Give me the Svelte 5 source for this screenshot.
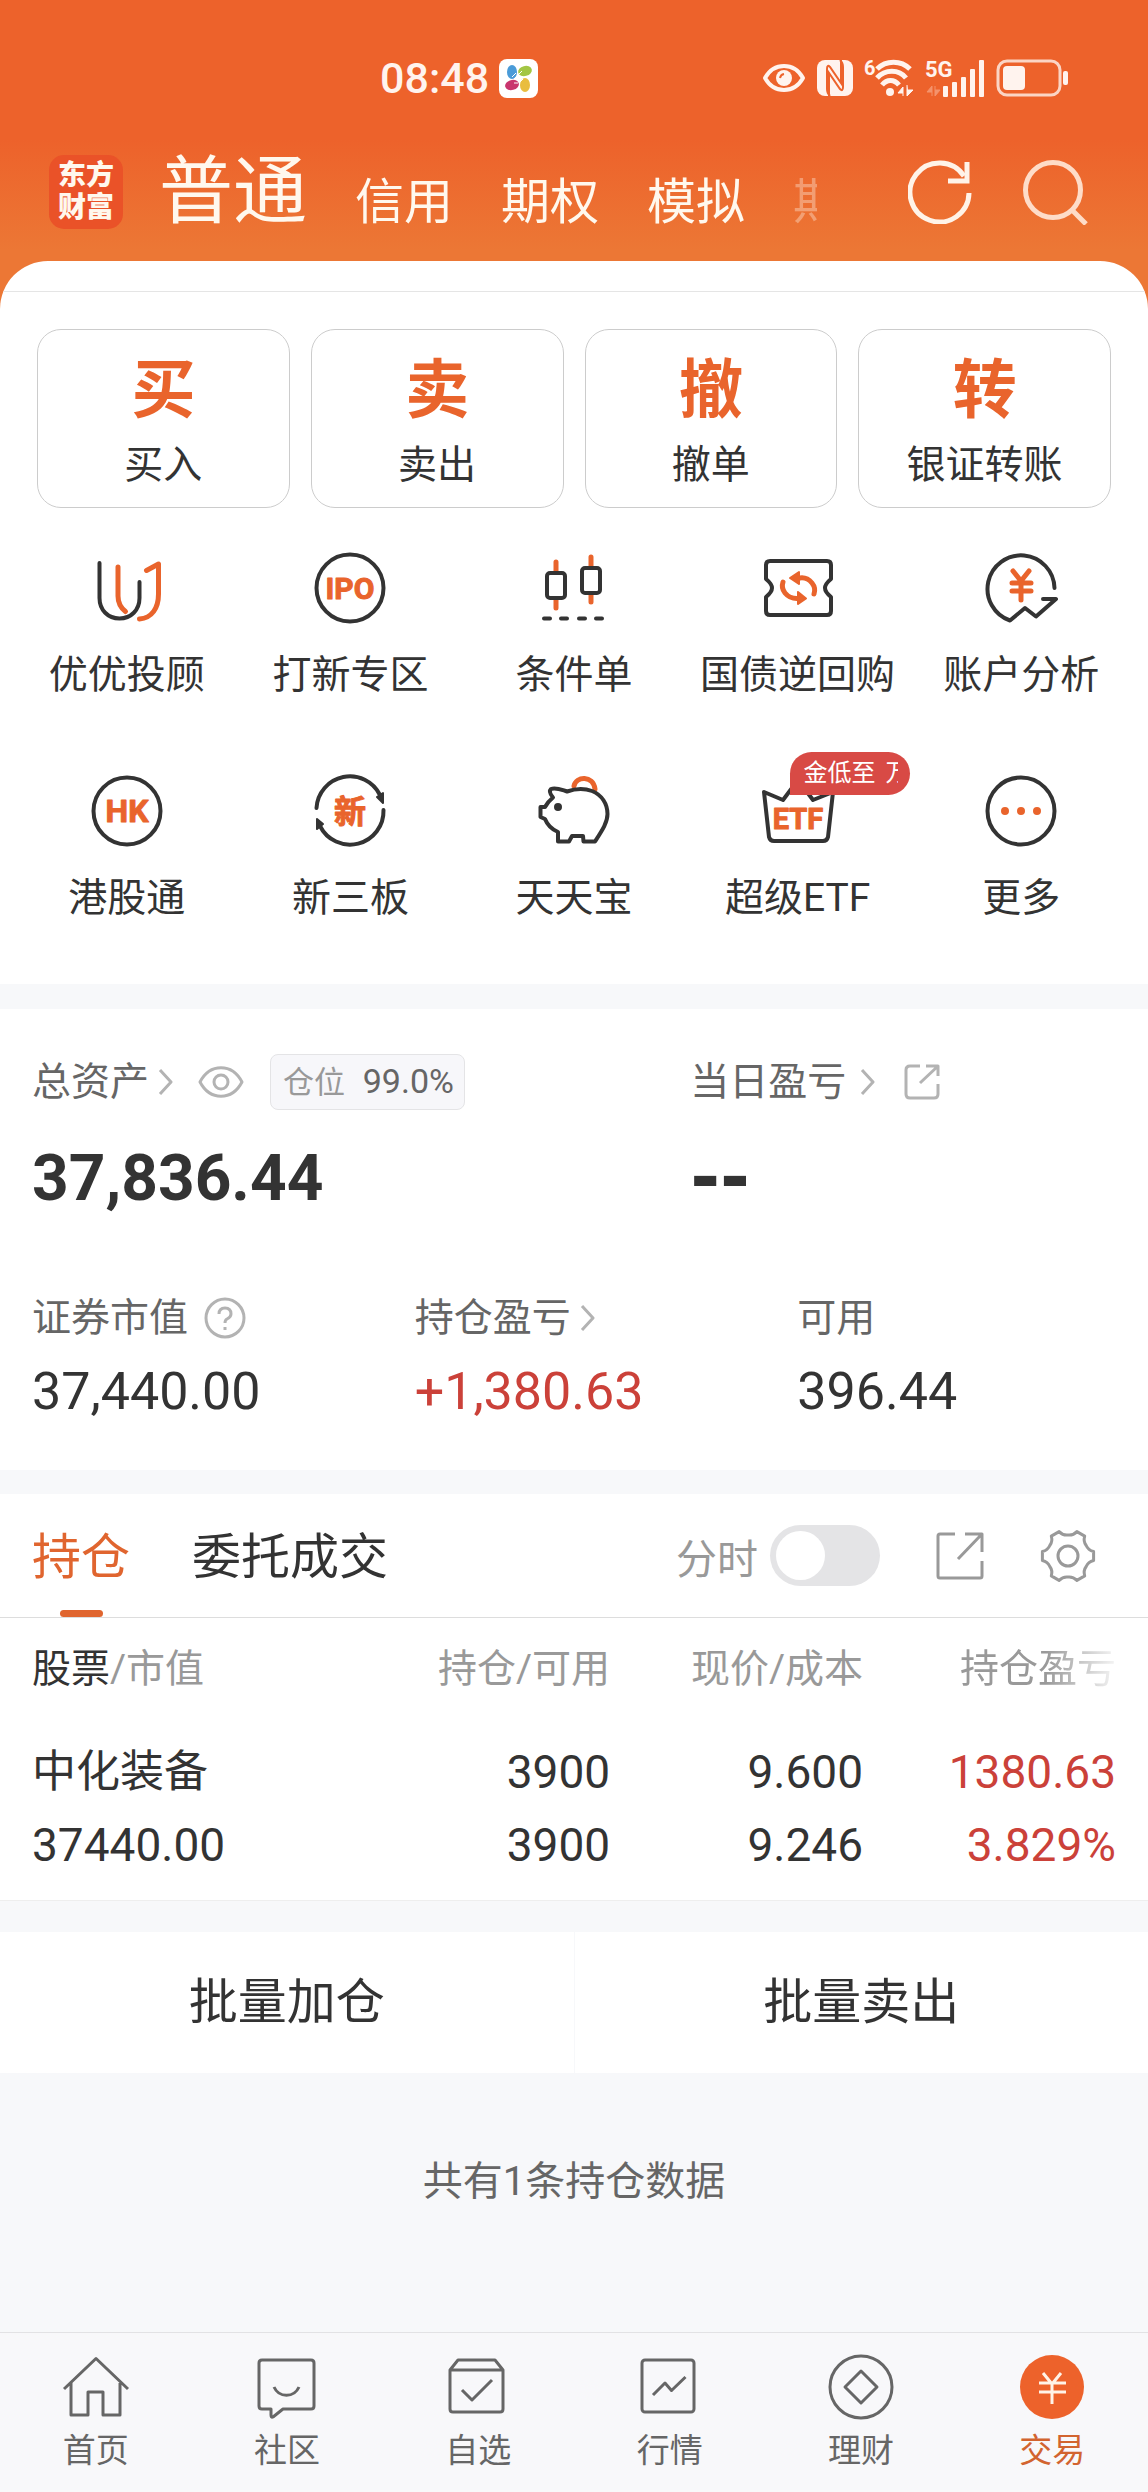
<script>
  const accountTabs = ['普通', '信用', '期权', '模拟', '期货'];
  const trades = [
    { mark: '买', label: '买入' },
    { mark: '卖', label: '卖出' },
    { mark: '撤', label: '撤单' },
    { mark: '转', label: '银证转账' }
  ];
  const shortcuts = [
    { icon: 'advisor', label: '优优投顾' },
    { icon: 'ipo', label: '打新专区' },
    { icon: 'candles', label: '条件单' },
    { icon: 'ticket', label: '国债逆回购' },
    { icon: 'analysis', label: '账户分析' },
    { icon: 'hk', label: '港股通' },
    { icon: 'otc', label: '新三板' },
    { icon: 'pig', label: '天天宝' },
    { icon: 'etf', label: '超级ETF', badge: true },
    { icon: 'more', label: '更多' }
  ];
  const nav = [
    { icon: 'home', label: '首页' },
    { icon: 'community', label: '社区' },
    { icon: 'watch', label: '自选' },
    { icon: 'market', label: '行情' },
    { icon: 'wealth', label: '理财' },
    { icon: 'trade', label: '交易' }
  ];

  // Outline of a six-toothed gear centred on (28, 28).
  function gearPath() {
    const at = (deg, r) => {
      const a = (deg * Math.PI) / 180;
      return `${(28 + r * Math.cos(a)).toFixed(1)} ${(28 + r * Math.sin(a)).toFixed(1)}`;
    };
    let d = '';
    for (let i = 0; i < 6; i++) {
      const a = i * 60;
      d += `${i ? 'L' : 'M'}${at(a - 10, 26)}L${at(a + 10, 26)}Q${at(a + 16, 21)} ${at(a + 30, 21)}Q${at(a + 44, 21)} ${at(a + 50, 26)}`;
    }
    return d + 'Z';
  }
  const gear = gearPath();
  let intraday = $state(false);
</script>

{#snippet chevron()}
  <svg class="line chevron" width="16" height="26" viewBox="0 0 16 26"><path d="M2 1L13 13L2 25" /></svg>
{/snippet}

<div class="page">
  <div class="top">
    <div class="status">
      <div class="clock">
        <span>08:48</span>
        <svg width="39" height="39" viewBox="0 0 39 39">
          <rect width="39" height="39" rx="8" fill="#fff" />
          <ellipse cx="13" cy="13" rx="5" ry="7" fill="#4a9bd8" />
          <ellipse cx="26" cy="12" rx="7" ry="5" fill="#a3c644" transform="rotate(-15 26 12)" />
          <ellipse cx="13" cy="26" rx="7" ry="5" fill="#c9356e" transform="rotate(-15 13 26)" />
          <ellipse cx="26" cy="26" rx="5" ry="7" fill="#e9bd3f" />
          <path d="M13 18l4-4M15 20l4-4M20 15l3-3M20 24l4-4M15 24l4 0" stroke="#fff" stroke-width="1" />
        </svg>
      </div>
      <div class="signals">
        <svg width="44" height="30" viewBox="0 0 44 30">
          <path d="M3 15C12 -1 32 -1 41 15C32 31 12 31 3 15Z" fill="none" stroke="#fff3ee" stroke-width="4" stroke-linejoin="round" />
          <circle cx="22" cy="15" r="8" fill="#fff3ee" />
          <path d="M18 15a5 5 0 0 1 4-4" fill="none" stroke="#ed622b" stroke-width="2" />
        </svg>
        <svg width="36" height="36" viewBox="0 0 36 36">
          <rect width="36" height="36" rx="8" fill="#fff3ee" />
          <path d="M12 36V13L23 29Q26 32 26 27V7Q26 3 23 0M24 0V23L13 7Q10 4 10 9V29Q10 33 13 36" fill="none" stroke="#ed622b" stroke-width="2" />
        </svg>
        <svg width="50" height="40" viewBox="0 0 50 40">
          <text x="0" y="17" class="tiny">6</text>
          <g fill="none" stroke="#fff3ee" stroke-width="5">
            <path d="M13 11C22 2 37 2 46 11" /><path d="M13 20C21 11 35 11 42 20" /><path d="M18 27C23 21 30 21 35 27" />
          </g>
          <circle cx="26" cy="34" r="4" fill="#fff3ee" />
          <path d="M39 38V29L34 35H39M43 27V38L49 32H44" fill="#fff3ee" stroke="#fff3ee" />
        </svg>
        <svg width="60" height="40" viewBox="0 0 60 40">
          <text x="0" y="19" class="fiveg">5G</text>
          <path d="M7 38V28L2 34H7M10 28V38L15 32H10" fill="#f4936c" stroke="#f4936c" />
          <g fill="#fff3ee">
            <rect x="18" y="28" width="5" height="11" rx="1" /><rect x="27" y="24" width="5" height="15" rx="1" />
            <rect x="36" y="19" width="5" height="20" rx="1" /><rect x="45" y="11" width="5" height="28" rx="1" />
            <rect x="54" y="2" width="5" height="37" rx="1" />
          </g>
        </svg>
        <svg width="73" height="38" viewBox="0 0 73 38">
          <rect x="2" y="2" width="62" height="34" rx="9" fill="none" stroke="#fbd5c5" stroke-width="3" />
          <rect x="7" y="7" width="22" height="24" rx="4" fill="#fff3ee" />
          <rect x="67" y="12" width="5" height="14" rx="2" fill="#fff3ee" />
        </svg>
      </div>
    </div>

    <header class="header">
      <div class="logo"><span>东方</span><span>财富</span></div>
      <div class="accounts">
        {#each accountTabs as t, i}
          <button class:current={i === 0} class:faint={i === 4}>{t}</button>
        {/each}
      </div>
      <button class="round" aria-label="刷新">
        <svg width="64" height="64" viewBox="0 0 64 64" fill="none" stroke="#fff3e8" stroke-width="5"><path d="M61 33A29.500 29.500 0 1 1 56 16" /><path d="M59 2V21H40" /></svg>
      </button>
      <button class="round" aria-label="搜索">
        <svg width="66" height="66" viewBox="0 0 66 66" fill="none" stroke="#fedcc8" stroke-width="5"><circle cx="30" cy="31" r="27.500" /><path d="M49 51L63 65" /></svg>
      </button>
    </header>

    <main class="panel">
      <div class="rule"></div>
      <div class="trades">
        {#each trades as t}
          <button><b>{t.mark}</b><span>{t.label}</span></button>
        {/each}
      </div>

      <div class="shortcuts">
        {#each shortcuts as s}
          <button>
            <span class="glyph">
              <svg class="tool" width="72" height="72" viewBox="0 0 72 72">
                {#if s.icon === 'advisor'}
                  <path d="M8.500 11V46C8.500 58 17 66.500 28.500 66.500S48.500 58 48.500 46V30" />
                  <path class="o" d="M27 15V44C27 51 30 56 34.500 59.500M55.500 18.500L67.500 12V42C67.500 56 61 66 48.500 67" />
                {:else if s.icon === 'ipo'}
                  <circle cx="36" cy="36" r="33.500" /><text x="36" y="47" font-size="30">IPO</text>
                {:else if s.icon === 'candles'}
                  <path class="o" d="M18 10V20M18 48V56M53 5V15M53 43V50" />
                  <rect x="9" y="21" width="18" height="25" rx="3" /><rect x="44" y="16" width="18" height="25" rx="3" />
                  <path d="M6 66.500H12M23 66.500H29M41 66.500H47M58 66.500H64" />
                {:else if s.icon === 'ticket'}
                  <path d="M8 9H65Q69 9 69 13V27Q63 32 63 36T69 45V59Q69 63 65 63H8Q4 63 4 59V45Q10 40 10 36T4 27V13Q4 9 8 9Z" />
                  <path class="o" d="M21 30Q19 36 23 41Q28 47 36 46.500M52 42Q54 36 50 31Q45 25 38 26" />
                  <path class="of" d="M28 26L37 20V32ZM44 46.500L36 40V52Z" />
                {:else if s.icon === 'analysis'}
                  <path d="M69.500 36A33.500 33.500 0 1 0 25 68.500L40 56L51 64.500L71 47H58" />
                  <path class="o" d="M28 19L36 29L44 19M36 29V48M27 31H46M27 39H46" />
                {:else if s.icon === 'hk'}
                  <circle cx="36" cy="36" r="33.500" /><text x="36" y="47" font-size="32">HK</text>
                {:else if s.icon === 'otc'}
                  <path d="M2.500 33A33.500 33.500 0 0 1 66 20M69.500 35A33.500 33.500 0 0 1 6 51" />
                  <path class="df" d="M63 22L69 18V28ZM9 49L3 54V44Z" />
                  <text x="36" y="48" font-size="32">新</text>
                {:else if s.icon === 'pig'}
                  <path class="o" d="M36 11C38 1 55 0 57 14" />
                  <path d="M13 14C18 12 24 15 29 16.500C36 14 46 13 54 16C64 20 69.500 29 69.500 39C69.500 47 65 54 57 66.500H45.500L45 61H34L31 66.500H20V57C13 54 9 49 7 44L2.500 42V32H7C9 28 12 25 15 22.500C12 19 11 16 13 14Z" />
                  <circle class="df" cx="20" cy="32" r="3" />
                {:else if s.icon === 'etf'}
                  <path d="M2 17L21 25L36 5L51 25L71 17L66 62Q65 66 61 66H12Q8 66 7 62Z" />
                  <text x="36" y="54" font-size="29">ETF</text>
                {:else}
                  <circle cx="36" cy="36" r="33.500" />
                  <circle class="of" cx="20" cy="36" r="3" /><circle class="of" cx="36" cy="36" r="3" /><circle class="of" cx="52" cy="36" r="3" />
                {/if}
              </svg>
              {#if s.badge}<span class="badge"><span class="ticker">金低至 <i>万</i></span></span>{/if}
            </span>
            <span>{s.label}</span>
          </button>
        {/each}
      </div>
    </main>
  </div>

  <section class="assets">
    <div class="totals">
      <div>
        <div class="caption">
          总资产{@render chevron()}
          <svg class="line eye" width="46" height="32" viewBox="0 0 46 32"><path d="M2 16C12 -3 34 -3 44 16C34 35 12 35 2 16Z" /><circle cx="23" cy="16" r="7" /></svg>
          <span class="chip">仓位 <em>99.0%</em></span>
        </div>
        <strong>37,836.44</strong>
      </div>
      <div>
        <div class="caption spaced">
          当日盈亏{@render chevron()}
          <svg class="line share" width="36" height="36" viewBox="0 0 36 36"><path d="M16 2H6Q2 2 2 6V30Q2 34 6 34H30Q34 34 34 30V20M16 19L33 3M22 2H34V12" /></svg>
        </div>
        <strong class="dash">--</strong>
      </div>
    </div>
    <div class="metrics">
      <div>
        <div class="caption">证券市值
          <svg class="line help" width="42" height="42" viewBox="0 0 42 42"><circle cx="21" cy="21" r="19" /><path d="M15 17Q15 11 21 11T27 17Q27 20 23 22Q21 23 21 26M21 30V33" /></svg>
        </div>
        <span>37,440.00</span>
      </div>
      <div><div class="caption">持仓盈亏{@render chevron()}</div><span class="up">+1,380.63</span></div>
      <div><div class="caption">可用</div><span>396.44</span></div>
    </div>
  </section>

  <section class="holdings">
    <div class="bar">
      <button class="tab current">持仓</button>
      <button class="tab">委托成交</button>
      <label class="toggle">分时<input type="checkbox" bind:checked={intraday} /></label>
      <button class="tool-btn" aria-label="分享">
        <svg width="48" height="48" viewBox="0 0 48 48"><path d="M19 2H4Q2 2 2 4V44Q2 46 4 46H44Q46 46 46 44V29M22 27L45 3M29 2H46V20" /></svg>
      </button>
      <button class="tool-btn" aria-label="设置">
        <svg width="56" height="56" viewBox="0 0 56 56"><path d={gear} /><circle cx="28" cy="28" r="10" /></svg>
      </button>
    </div>
    <table>
      <thead>
        <tr><th><b>股票</b>/市值</th><th>持仓/可用</th><th>现价/成本</th><th><span class="fade">持仓盈亏</span></th></tr>
      </thead>
      <tbody>
        <tr>
          <td><span class="name">中化装备</span><span>37440.00</span></td>
          <td><span>3900</span><span>3900</span></td>
          <td><span>9.600</span><span>9.246</span></td>
          <td class="up"><span>1380.63</span><span>3.829%</span></td>
        </tr>
      </tbody>
    </table>
  </section>

  <div class="batch"><button>批量加仓</button><button>批量卖出</button></div>
  <p class="count">共有1条持仓数据</p>

  <nav>
    {#each nav as n}
      <a href="#{n.icon}" class:active={n.icon === 'trade'}>
        <svg width="68" height="68" viewBox="0 0 68 68">
          {#if n.icon === 'home'}
            <path d="M2 36L34 5.500L66 36M9 30V62H26V39H41V62H58V30" />
          {:else if n.icon === 'community'}
            <path d="M9 7H58Q61 7 61 10V53Q61 56 58 56H30L20 64Q18 65 18 62V56H9Q6 56 6 53V10Q6 7 9 7Z" /><path d="M21 34C26 45 41 45 46 34" />
          {:else if n.icon === 'watch'}
            <path d="M6 17L14 7H51L59 17V56Q59 59 56 59H9Q6 59 6 56ZM6 17H59M18 37L28 47L48 27" />
          {:else if n.icon === 'market'}
            <rect x="6" y="7" width="52" height="52" rx="3" /><path d="M17 42L29 30L35.500 37.500L49.500 24" />
          {:else if n.icon === 'wealth'}
            <circle cx="34" cy="34" r="31" /><path d="M34 18L50 34L34 50L18 34Z" />
          {:else}
            <circle cx="34" cy="34" r="32" /><path d="M25 20L34 31L43 20M34 31V51M21 30H48M21 39H48" />
          {/if}
        </svg>
        <span>{n.label}</span>
      </a>
    {/each}
  </nav>
</div>

<style>
  :global(body) { margin: 0; background: #f7f8fa; }
  .page {
    min-height: 100vh;
    display: flex;
    flex-direction: column;
    background: #f7f8fa;
    color: #333;
    font-family: Roboto, "Noto Sans CJK SC", sans-serif;
  }
  button {
    font: inherit;
    color: inherit;
    border: 0;
    padding: 0;
    background: none;
    white-space: nowrap;
  }
  svg { display: block; flex: none; }

  .top { background: linear-gradient(#ed622b 140px, #ec7735 250px); }
  .status {
    display: flex;
    justify-content: space-between;
    align-items: center;
    height: 44px;
    padding: 56px 79px 0 380px;
    color: #fff3ee;
  }
  .clock { display: flex; align-items: center; gap: 10px; font-size: 43px; font-weight: 500; line-height: 44px; }
  .signals { display: flex; align-items: center; gap: 11px; }
  .signals svg { overflow: visible; }
  .tiny { font-size: 20px; font-weight: 700; fill: #fff3ee; }
  .fiveg { font-size: 22px; font-weight: 700; fill: #fff3ee; }

  .header {
    display: flex;
    align-items: center;
    height: 92px;
    padding: 46px 59px 23px 49px;
    color: #fff8ee;
  }
  .logo {
    display: flex;
    flex-direction: column;
    justify-content: center;
    align-items: center;
    width: 74px;
    height: 74px;
    border-radius: 15px;
    background: #ea5228;
    font-size: 28px;
    font-weight: 900;
    line-height: 32px;
  }
  .accounts {
    flex: 1;
    display: flex;
    align-items: flex-end;
    gap: 48px;
    min-width: 0;
    overflow: hidden;
    margin: 0 91px 0 36px;
    font-size: 49px;
    line-height: 70px;
  }
  .accounts .current { font-size: 74px; line-height: 92px; }
  .accounts .faint { opacity: 0.35; }
  .round + .round { margin-left: 51px; }

  .panel { background: #fff; border-radius: 48px 48px 0 0; overflow: hidden; }
  .rule { height: 30px; border-bottom: 1px solid #e5e5e5; }
  .trades {
    display: grid;
    grid-template-columns: repeat(4, 1fr);
    gap: 21px;
    padding: 37px 37px 0;
  }
  .trades button {
    display: flex;
    flex-direction: column;
    align-items: center;
    gap: 14px;
    padding: 25px 0 18px;
    border: 1px solid #ccc;
    border-radius: 24px;
    font-size: 39px;
    line-height: 48px;
  }
  .trades b { color: #e9642c; font-size: 64px; line-height: 72px; font-weight: 700; }

  .shortcuts {
    display: grid;
    grid-template-columns: repeat(5, 1fr);
    row-gap: 76px;
    padding: 44px 15px 62px;
    font-size: 39px;
    line-height: 48px;
  }
  .shortcuts button { display: flex; flex-direction: column; align-items: center; gap: 27px; }
  .glyph { position: relative; }
  .tool { fill: none; stroke: #333; stroke-width: 4; stroke-linecap: round; stroke-linejoin: round; overflow: visible; }
  .tool .o { stroke: #e9642c; stroke-width: 5; }
  .tool .of { fill: #e9642c; stroke: #e9642c; stroke-width: 2; }
  .tool .df { fill: #333; stroke-width: 2; }
  .tool text { fill: #e9642c; stroke: #e9642c; stroke-width: 1; text-anchor: middle; font-weight: 700; }
  .badge {
    position: absolute;
    left: 28px;
    top: -23px;
    padding: 0 12px 0 14px;
    border-radius: 22px 22px 22px 0;
    background: #d84a45;
    color: #fff;
    font-size: 24px;
    line-height: 43px;
  }
  .ticker { display: block; width: 94px; overflow: hidden; white-space: nowrap; text-align: left; }
  .ticker i { font-style: normal; margin-left: 4px; }

  .assets { margin-top: 25px; padding: 46px 0 48px; background: #fff; }
  .totals { display: grid; grid-template-columns: 17fr 11fr; padding: 0 32px; }
  .caption { display: flex; align-items: center; color: #666; font-size: 39px; line-height: 48px; white-space: nowrap; }
  .totals .caption { height: 54px; }
  .line { fill: none; stroke: #b3b3b3; stroke-width: 3; stroke-linejoin: round; }
  .chevron { margin-left: 9px; }
  .spaced .chevron { margin-left: 14px; }
  .eye { margin-left: 24px; }
  .share { margin-left: 28px; }
  .help { margin-left: 16px; }
  .chip {
    margin-left: 26px;
    padding: 0 10px 0 12px;
    border: 1px solid #e4e4e6;
    border-radius: 8px;
    background: #f7f7fa;
    color: #999;
    font-size: 31px;
    line-height: 52px;
  }
  .chip em { margin-left: 10px; color: #666; font-style: normal; font-size: 34px; }
  strong { display: block; margin-top: 32px; font-size: 64px; line-height: 76px; }
  .dash { font-family: "DejaVu Sans", sans-serif; font-size: 72px; line-height: 70px; }
  .metrics { display: grid; grid-template-columns: repeat(3, 1fr); margin-top: 77px; }
  .metrics > div { padding-left: 32px; }
  .metrics span { display: block; margin-top: 20px; font-size: 52px; line-height: 60px; }
  .up, .metrics .up { color: #cb4139; }

  .holdings { margin-top: 24px; background: #fff; border-bottom: 1px solid #eee; }
  .bar {
    display: flex;
    align-items: center;
    height: 123px;
    padding: 0 52px 0 32px;
    border-bottom: 1px solid #ddd;
  }
  .tab { position: relative; height: 100%; margin-right: 62px; padding-bottom: 6px; font-size: 49px; }
  .tab.current { color: #e0652f; }
  .tab.current::after {
    content: "";
    position: absolute;
    left: 50%;
    bottom: 0;
    width: 43px;
    height: 7px;
    margin-left: -21px;
    border-radius: 4px;
    background: #e0652f;
  }
  .toggle { display: flex; align-items: center; gap: 12px; margin-left: auto; color: #999; font-size: 41px; }
  .toggle input {
    appearance: none;
    display: flex;
    align-items: center;
    width: 110px;
    height: 61px;
    margin: 0;
    padding: 0 6px;
    box-sizing: border-box;
    border-radius: 31px;
    background: #e4e4e6;
  }
  .toggle input::before { content: ""; width: 49px; height: 49px; border-radius: 50%; background: #fff; }
  .toggle input:checked { background: #e9642c; justify-content: flex-end; }
  .tool-btn { margin-left: 56px; }
  .tool-btn svg { fill: none; stroke: #999; stroke-width: 3; stroke-linejoin: round; }

  table { width: calc(100% - 64px); margin: 0 32px; border-collapse: collapse; table-layout: fixed; }
  th { padding: 27px 0 0; color: #999; font-size: 39px; line-height: 48px; font-weight: 400; text-align: right; white-space: nowrap; }
  th b { color: #333; font-weight: 400; }
  th:first-child, td:first-child { width: 30%; text-align: left; }
  td { padding: 43px 0 18px; font-size: 46px; line-height: 73px; text-align: right; }
  td span { display: block; }
  .name { font-size: 44px; }
  .fade { mask-image: linear-gradient(to right, #000 55%, transparent 105%); }

  .batch { display: flex; gap: 1px; margin-top: 31px; }
  .batch button { flex: 1; background: #fff; font-size: 49px; line-height: 141px; }
  .count { margin: 85px 0; color: #666; font-size: 40px; line-height: 48px; text-align: center; }

  nav {
    display: grid;
    grid-template-columns: repeat(6, 1fr);
    margin-top: auto;
    border-top: 1px solid #e2e2e4;
    background: #f8f8fa;
  }
  nav a {
    display: flex;
    flex-direction: column;
    align-items: center;
    gap: 10px;
    padding: 20px 0 21px;
    color: #666;
    font-size: 33px;
    line-height: 40px;
    text-decoration: none;
  }
  nav svg { fill: none; stroke: #666; stroke-width: 3; stroke-linejoin: round; }
  nav .active { color: #d2642f; }
  .active svg { stroke: #fff3e8; }
  .active circle { fill: #ed622b; stroke: none; }
</style>
